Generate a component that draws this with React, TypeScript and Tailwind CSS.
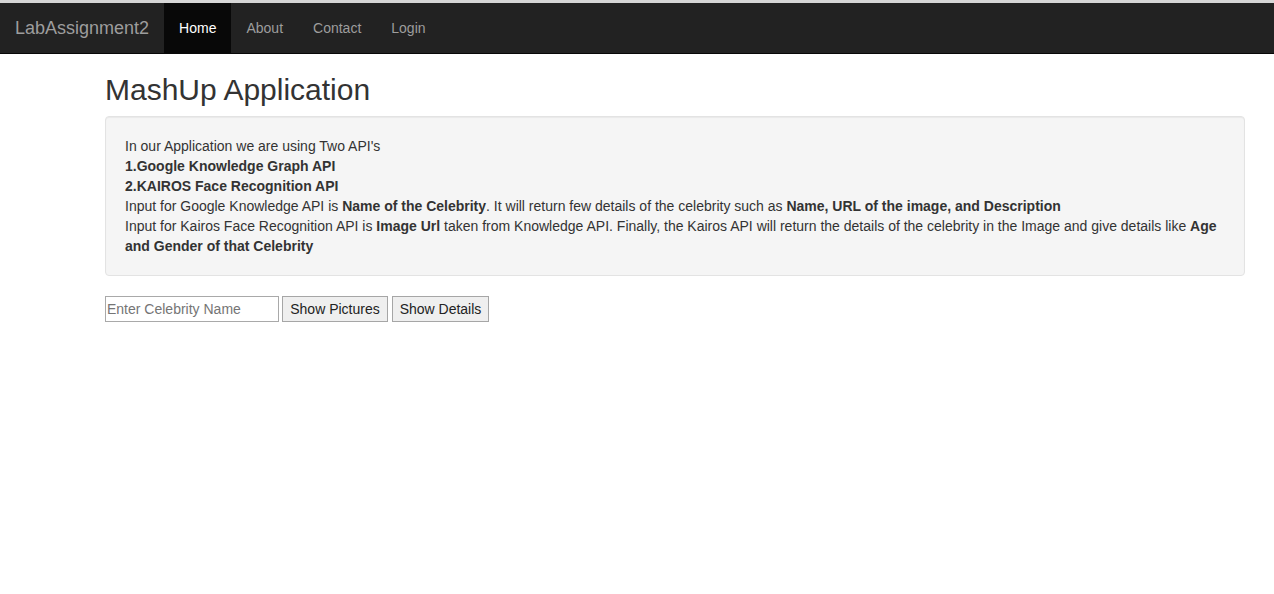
export default function App() {
  const links = ["About", "Contact", "Login"];
  return (
    <div className="min-h-screen bg-white font-['Liberation_Sans',Arial,sans-serif] text-[14px] leading-[20px] text-[#333]">
      <div className="h-[3px] bg-[#d6d6d6]" />
      <nav className="flex h-[51px] items-stretch border-b border-[#080808] bg-[#222]">
        <a className="flex items-center px-[15px] text-[18px] text-[#9d9d9d]">LabAssignment2</a>
        <a className="flex items-center bg-[#080808] px-[15px] text-white">Home</a>
        {links.map((l) => (
          <a key={l} className="flex items-center px-[15px] text-[#9d9d9d]">
            {l}
          </a>
        ))}
      </nav>

      <main className="ml-[105px] mr-[29px]">
        <h2 className="mt-[19px] mb-[10px] text-[30px] leading-[33px] font-normal">MashUp Application</h2>
        <div className="mb-[20px] rounded-[4px] border border-[#e3e3e3] bg-[#f5f5f5] p-[19px] shadow-[inset_0_1px_1px_rgba(0,0,0,0.05)]">
          <p>In our Application we are using Two API's</p>
          <p className="font-bold">1.Google Knowledge Graph API</p>
          <p className="font-bold">2.KAIROS Face Recognition API</p>
          <p>
            Input for Google Knowledge API is <b>Name of the Celebrity</b>. It will return few details of the celebrity
            such as <b>Name, URL of the image, and Description</b>
          </p>
          <p>
            Input for Kairos Face Recognition API is <b>Image Url</b> taken from Knowledge API. Finally, the Kairos API will
            return the details of the celebrity in the Image and give details like <b>Age and Gender of that Celebrity</b>
          </p>
        </div>

        <div className="flex items-center">
          <input
            placeholder="Enter Celebrity Name"
            className="h-[26px] w-[174px] border border-[#a9a9a9] bg-white px-[1px] text-[14px] text-[#333] placeholder:text-[#757575] outline-none"
          />
          <button className="ml-[3px] h-[26px] w-[106px] border border-[#a6a6a6] bg-[#efefef] text-[14px] text-[#222]">
            Show Pictures
          </button>
          <button className="ml-[4px] h-[26px] w-[97px] border border-[#a6a6a6] bg-[#efefef] text-[14px] text-[#222]">
            Show Details
          </button>
        </div>
      </main>
    </div>
  );
}
